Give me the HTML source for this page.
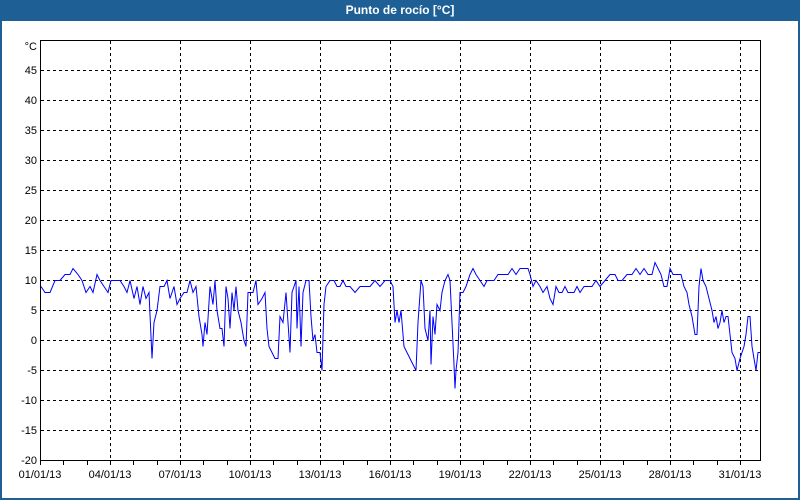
<!DOCTYPE html>
<html><head><meta charset="utf-8"><style>
html,body{margin:0;padding:0;width:800px;height:500px;overflow:hidden;background:#1e6096;font-family:"Liberation Sans",sans-serif}
#t{position:absolute;left:0;top:0;width:800px;height:21px;color:#fff;font-weight:bold;font-size:12px;text-align:center;line-height:21px}
#w{position:absolute;left:2px;top:21px;width:796px;height:477px;background:#fff}
svg{position:absolute;left:0;top:0}
text{font-family:"Liberation Sans",sans-serif;font-size:11px;fill:#000}
</style></head><body>
<div id="t">Punto de rocío [°C]</div>
<div id="w"></div>
<svg width="800" height="500" id="s">
<g id="g" stroke="#000" stroke-width="1" stroke-dasharray="3,3" fill="none"></g>
<polyline id="p" fill="none" stroke="#0000ff" stroke-width="1"/>
<rect x="40.5" y="40.5" width="720" height="420" fill="none" stroke="#000"/>
<g id="l"></g>
</svg>
<script>
var g=document.getElementById('g'),l=document.getElementById('l'),ns='http://www.w3.org/2000/svg',h='';
var lab='';
for(var i=1;i<=13;i++){var y=40.5+i*30;if(i<14)h+='<line x1="41" x2="760" y1="'+y+'" y2="'+y+'"/>';}
for(var i=1;i<=10;i++){var x=40.5+i*70;h+='<line y1="41" y2="460" x1="'+x+'" x2="'+x+'"/>';}
g.innerHTML=h;
lab+='<text x="37" y="50" text-anchor="end">°C</text>';
for(var v=45;v>=-20;v-=5){lab+='<text x="37" y="'+(344-6*v)+'" text-anchor="end">'+v+'</text>';}
var d=['01','04','07','10','13','16','19','22','25','28','31'];
for(var i=0;i<11;i++){lab+='<text x="'+(40+i*70)+'" y="478" text-anchor="middle">'+d[i]+'/01/13</text>';}
for(var i=0;i<=30;i++){var x=Math.round(40+i*70/3)+0.5;lab+='<line x1="'+x+'" x2="'+x+'" y1="461" y2="465" stroke="#000"/>';}
l.innerHTML=lab;
var pts=[41,9,45,8,50,8,55,10,60,10,65,11,70,11,73,12,78,11,82,10,86,8,90,9,93,8,97,11,100,10,104,9,108,8,111,10,116,10,120,10,124,9,127,8,130,10,134,7,137,9,140,6,143,9,146,7,149,8,152,-3,154,3,157,5,160,9,164,9,167,10,170,7,174,9,177,6,180,7,184,8,187,8,190,10,193,8,196,9,199,4,202,1,203,-1,205,3,207,1,210,9,213,6,215,10,217,5,220,2,222,2,224,-1,226,9,228,7,230,2,232,8,234,5,236,9,238,5,241,3,244,0,246,-1,248,8,250,8,253,8,256,10,258,6,262,7,265,8,267,2,269,-1,272,-2,275,-3,278,-3,280,4,283,3,286,8,288,3,290,-2,292,8,294,9,296,10,297,2,299,9,301,-1,303,8,306,10,309,10,311,4,313,0,315,1,317,-2,320,-2,322,-5,324,6,326,9,330,10,334,10,337,9,340,9,343,10,346,9,350,9,355,8,360,9,365,9,370,9,375,10,380,9,385,10,390,10,393,9,395,3,397,5,399,3,401,5,404,-1,407,-2,410,-3,413,-4,416,-5,418,3,421,10,423,9,425,2,428,0,430,5,431,-4,433,4,435,1,437,6,440,5,442,8,445,10,448,11,450,10,452,3,454,-4,455,-8,456,-5,458,-2,460,8,463,8,466,9,470,11,473,12,476,11,480,10,484,9,487,10,490,10,494,10,498,11,503,11,508,11,512,12,516,11,520,12,524,12,528,12,530,11,533,9,536,10,540,9,543,8,547,9,550,7,553,6,556,9,559,8,562,8,565,9,568,8,571,8,574,8,577,9,580,8,584,9,588,9,592,9,596,10,600,9,605,10,610,11,615,11,618,10,622,10,627,11,632,11,636,12,640,11,644,12,648,11,652,11,655,13,658,12,661,11,664,9,667,9,670,12,673,11,677,11,681,11,684,9,687,8,689,6,692,4,695,1,697,1,699,9,701,12,703,10,706,9,709,7,712,5,714,3,716,4,718,2,720,3,722,5,724,3,726,4,728,4,730,1,732,-2,735,-3,737,-5,740,-3,742,-2,744,-1,746,1,748,4,750,4,752,-1,754,-3,756,-5,758,-2,760,-2];
var s='';for(var i=0;i<pts.length;i+=2){s+=pts[i]+','+(340.5-6*pts[i+1])+' ';}
document.getElementById('p').setAttribute('points',s);
</script>
</body></html>
